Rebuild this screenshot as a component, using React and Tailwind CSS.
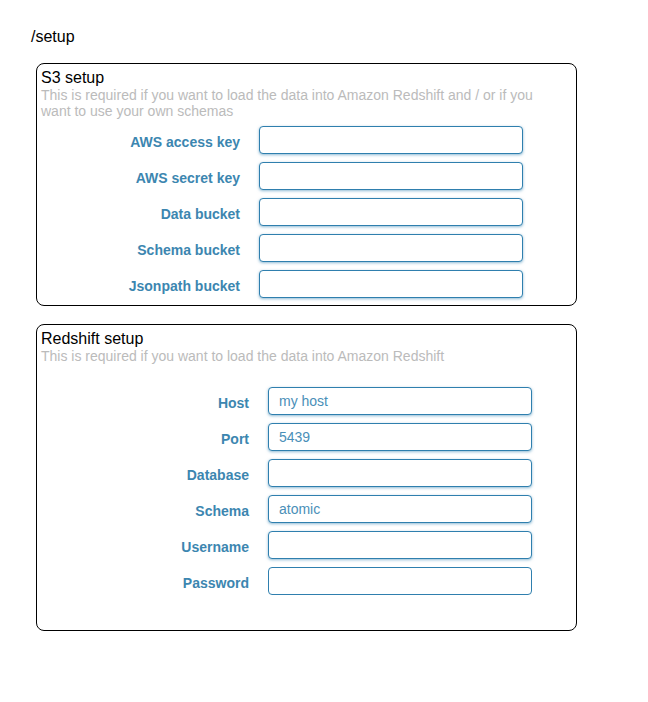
import React from "react";

const font = { fontFamily: '"Liberation Sans", Arial, sans-serif' };

function Row({ label, value, labelW, shadow = true }) {
  return (
    <div className="flex items-center h-[28px]">
      <div
        className="shrink-0 text-right font-bold text-[14px] text-[#3c86b0] pr-[19px] pt-[5px]"
        style={{ width: labelW }}
      >
        {label}
      </div>
      <div
        className={
          "w-[264px] h-[28px] rounded-[4px] border border-[#2f7fae] bg-white flex items-center pl-[10px] text-[14px] text-[#4a8fb8] " +
          (shadow ? "shadow-[0_1px_3px_rgba(47,127,174,0.55)]" : "")
        }
      >
        {value}
      </div>
    </div>
  );
}

export default function App() {
  const s3 = ["AWS access key", "AWS secret key", "Data bucket", "Schema bucket", "Jsonpath bucket"];
  const rs = [
    ["Host", "my host"],
    ["Port", "5439"],
    ["Database", ""],
    ["Schema", "atomic"],
    ["Username", ""],
    ["Password", ""],
  ];
  return (
    <div className="w-[648px] h-[702px] bg-white text-black" style={font}>
      <div className="pt-[28px] pl-[31px] text-[16px] leading-[18px]">/setup</div>
      <div className="ml-[36px] mt-[17px] w-[541px] h-[243px] border border-black rounded-[8px] pl-[4px] pt-[5px]">
        <div className="text-[16px] leading-[18px]">S3 setup</div>
        <div className="text-[14px] leading-[16px] text-[#bbbbbb] max-w-[505px]">
          This is required if you want to load the data into Amazon Redshift and / or if you want to use your own schemas
        </div>
        <div className="mt-[7px] flex flex-col gap-[8px] -ml-[4px]">
          {s3.map((l) => (
            <Row key={l} label={l} labelW={222} />
          ))}
        </div>
      </div>
      <div className="ml-[36px] mt-[18px] w-[541px] h-[307px] border border-black rounded-[8px] pl-[4px] pt-[5px]">
        <div className="text-[16px] leading-[18px]">Redshift setup</div>
        <div className="text-[14px] leading-[16px] text-[#bbbbbb]">
          This is required if you want to load the data into Amazon Redshift
        </div>
        <div className="mt-[23px] flex flex-col gap-[8px] -ml-[4px]">
          {rs.map(([l, v], i) => (
            <Row key={l} label={l} value={v} labelW={231} shadow={i !== 5} />
          ))}
        </div>
      </div>
    </div>
  );
}
